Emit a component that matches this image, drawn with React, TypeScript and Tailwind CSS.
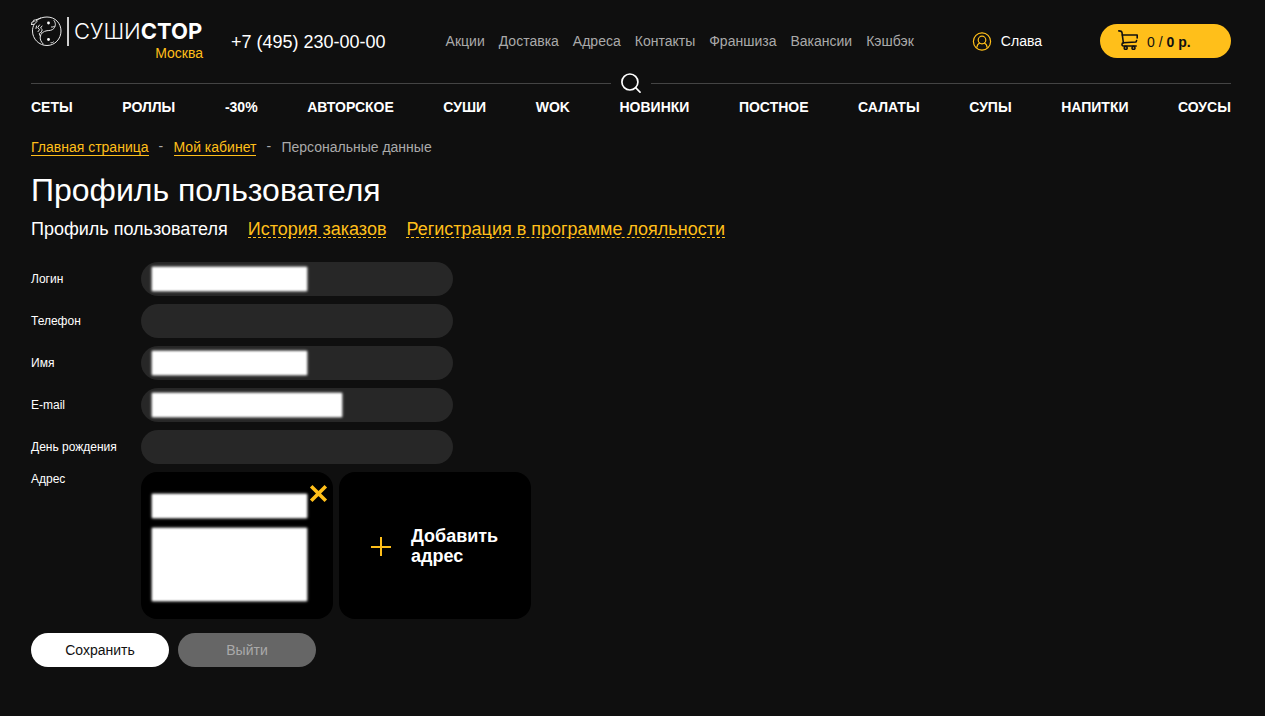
import type { ReactNode } from 'react';

interface Field {
    id: string;
    label: string;
    type: string;
    maskClass?: string;
}

const topLinks = ['Акции', 'Доставка', 'Адреса', 'Контакты', 'Франшиза', 'Вакансии', 'Кэшбэк'];

const menu = [
    'СЕТЫ',
    'РОЛЛЫ',
    '-30%',
    'АВТОРСКОЕ',
    'СУШИ',
    'WOK',
    'НОВИНКИ',
    'ПОСТНОЕ',
    'САЛАТЫ',
    'СУПЫ',
    'НАПИТКИ',
    'СОУСЫ'
];

const fields: Field[] = [
    { id: 'login', label: 'Логин', type: 'text', maskClass: 'w-[155px]' },
    { id: 'phone', label: 'Телефон', type: 'tel' },
    { id: 'name', label: 'Имя', type: 'text', maskClass: 'w-[155px]' },
    { id: 'email', label: 'E-mail', type: 'email', maskClass: 'w-[190px]' },
    { id: 'birthday', label: 'День рождения', type: 'text' }
];

function LogoMark() {
    return (
        <svg className="w-8 h-8" viewBox="0 0 32 32" fill="none" stroke="#e8e8e8" strokeWidth="1" strokeLinecap="round" strokeLinejoin="round">
            <path d="M5 6C8 3.200 12 2 16 2c8.200 0 14 6.200 14 14s-6 14.500-14 14.500S1.500 24 1.500 16c0-2.500.6-4.700 1.700-6.700" />
            <path d="M.5 9.500 1 7 3.200 6.500 2.500 5.300C5 4.800 7.200 4.300 9.500 3M.5 9.500l2.700-.2L6 6.500" />
            <path d="M23 5.500c1.800 2.300 2 5.500-.2 8-1.800 2-4.300 2-6.800 2.200-3.500.4-6.500 2.800-6.800 6.300-.2 2.700 1 5 3 7" />
            <path d="M20.500 12c1 .2 2 0 3-.7M9.200 21l-1-2.500 2.300-1.500M8.500 10 6.800 12.500l1.700 2.200-1.500 2M11 11l-1.500 2 1.800 1.700-.8 1.800M5.500 11 5 13.500" />
            <path d="M20 27.700c1 .2 1.800 0 2.500-.8" />
            <circle cx="17.500" cy="8" r="1.400" fill="#fff" stroke="none" />
            <circle cx="17.500" cy="24.500" r="1.400" fill="#fff" stroke="none" />
        </svg>
    );
}

function UserIcon() {
    return (
        <svg className="w-5 h-5" viewBox="0 0 20 20" fill="none" stroke="#ffbf1a" strokeWidth="1.200">
            <circle cx="10" cy="10.500" r="8.600" />
            <circle cx="10" cy="9" r="3.800" />
            <path d="M4.800 16.800c.2-2.500 1.400-4.200 3.200-5M15.200 16.800c-.2-2.500-1.400-4.200-3.200-5" />
        </svg>
    );
}

function CartIcon() {
    return (
        <svg className="w-5 h-5" viewBox="0 0 20 20" fill="none" stroke="#111" strokeWidth="1.600" strokeLinecap="round" strokeLinejoin="round">
            <path d="M.8.900c2 0 2.900.4 3.200 1.800L5.400 13" />
            <path d="M4.300 5H19.200v3M18 12l-12.800.8c-1.500.3-1.800 3.200.2 3.200h12.800M18 12l.6-1.500" />
            <circle cx="7.700" cy="17.900" r="1.500" />
            <circle cx="15.500" cy="17.900" r="1.500" />
        </svg>
    );
}

function Mask({ className }: { className: string }) {
    return <span aria-hidden="true" className={`block bg-white blur-[1px] shadow-[0_0_2px_#fff] ${className}`} />;
}

function Crumb({ children }: { children: ReactNode }) {
    return (
        <>
            <a href="#" className="text-[#ffbf1a] border-b border-[#ffbf1a]">{children}</a>
            <span className="w-[5px] leading-[14px] text-[#aaa]">-</span>
        </>
    );
}

function Header() {
    return (
        <header>
            <div className="flex items-start h-[73px] pt-[15px]">
                <a href="#" className="w-[172px] shrink-0">
                    <span className="flex items-center h-8">
                        <LogoMark />
                        <span className="w-[2px] h-[29px] ml-1 mr-[5px] bg-white/80" />
                        <span className="text-[22px] leading-8 font-['Inter',sans-serif] whitespace-nowrap">
                            <span className="font-light">СУШИ</span>
                            <span className="font-bold">СТОР</span>
                        </span>
                    </span>
                    <span className="block text-right text-sm leading-4 -mt-0.5 text-[#ffbf1a]">Москва</span>
                </a>
                <a href="tel:+74952300000" className="ml-7 mt-[15px] text-lg leading-6 whitespace-nowrap">+7 (495) 230-00-00</a>
                <nav className="flex gap-[14px] ml-[60px] mt-4 text-sm leading-5 text-[#aaa]">
                    {topLinks.map((link) => (
                        <a key={link} href="#">{link}</a>
                    ))}
                </nav>
                <div className="flex items-center ml-auto mt-[9px]">
                    <a href="#" className="flex items-center gap-[9px] text-sm leading-5">
                        <UserIcon />
                        Слава
                    </a>
                    <button type="button" className="flex items-center gap-[9px] w-[131px] h-[34px] ml-[58px] pl-[18px] rounded-full bg-[#ffbf1a] text-sm text-[#111]">
                        <span className="-mt-0.5"><CartIcon /></span>
                        <span className="pt-0.5">0 / <b>0 р.</b></span>
                    </button>
                </div>
            </div>
            <div className="flex items-center h-5">
                <span className="flex-1 h-px bg-[#444]" />
                <button type="button" aria-label="Поиск" className="flex justify-center w-10">
                    <svg className="w-5 h-5" viewBox="0 0 20 20" fill="none" stroke="#fff" strokeWidth="1.700">
                        <circle cx="8.900" cy="9" r="8" />
                        <path d="m14.600 14.700 5 5" />
                    </svg>
                </button>
                <span className="flex-1 h-px bg-[#444]" />
            </div>
            <nav className="flex justify-between mt-1 text-sm leading-5 font-bold">
                {menu.map((item) => (
                    <a key={item} href="#">{item}</a>
                ))}
            </nav>
        </header>
    );
}

export default function App() {
    return (
        <div className="min-h-screen bg-[#0f0f0f] pl-[31px] pr-[34px] pb-12 font-['Liberation_Sans',sans-serif] text-white">
            <Header />

            <main>
                <div className="flex gap-[10px] mt-[22px] text-sm leading-4">
                    <Crumb>Главная страница</Crumb>
                    <Crumb>Мой кабинет</Crumb>
                    <span className="text-[#aaa]">Персональные данные</span>
                </div>

                <h1 className="mt-[14px] text-[32px] leading-10">Профиль пользователя</h1>

                <div className="flex gap-5 mt-[11px] text-lg leading-4">
                    <span>Профиль пользователя</span>
                    <a href="#" className="text-[#ffbf1a] border-b border-dashed border-[#ffbf1a]">История заказов</a>
                    <a href="#" className="text-[#ffbf1a] border-b border-dashed border-[#ffbf1a]">Регистрация в программе лояльности</a>
                </div>

                <form className="mt-6">
                    <div className="flex flex-col gap-2">
                        {fields.map((field) => (
                            <div key={field.id} className="flex items-center">
                                <label htmlFor={field.id} className="w-[110px] text-xs">{field.label}</label>
                                <div className="relative w-[312px]">
                                    <input
                                        id={field.id}
                                        type={field.type}
                                        className="block w-full h-[34px] px-4 rounded-full bg-[#272727] text-sm"
                                    />
                                    {field.maskClass && (
                                        <div className="absolute left-[11px] top-[5px]">
                                            <Mask className={`h-6 ${field.maskClass}`} />
                                        </div>
                                    )}
                                </div>
                            </div>
                        ))}

                        <div className="flex">
                            <span className="w-[110px] text-xs leading-[14px]">Адрес</span>
                            <div className="flex gap-[6px]">
                                {/* Saved address */}
                                <div className="relative flex flex-col gap-[10px] w-48 h-[147px] pl-[11px] pt-[22px] rounded-2xl bg-black">
                                    <Mask className="w-[155px] h-6" />
                                    <Mask className="w-[155px] h-[73px]" />
                                    <button type="button" aria-label="Удалить адрес" className="absolute top-3 right-[5px]">
                                        <svg className="w-[19px] h-[19px]" viewBox="0 0 19 19" stroke="#ffbf1a" strokeWidth="3.600">
                                            <path d="M2.200 2.200 16.800 16.800M16.800 2.200 2.200 16.800" />
                                        </svg>
                                    </button>
                                </div>

                                <button type="button" className="flex items-center gap-5 w-48 h-[147px] pl-8 rounded-2xl bg-black text-left text-lg leading-5 font-bold">
                                    <svg className="w-5 h-5 shrink-0" viewBox="0 0 20 20" stroke="#ffbf1a" strokeWidth="2">
                                        <path d="M0 11h20M10 1v19" />
                                    </svg>
                                    <span>Добавить<br />адрес</span>
                                </button>
                            </div>
                        </div>
                    </div>

                    <div className="flex gap-[9px] mt-[14px] text-sm">
                        <button type="button" className="w-[138px] h-[34px] rounded-full bg-white text-[#111]">Сохранить</button>
                        <button type="button" className="w-[138px] h-[34px] rounded-full bg-[#666] text-[#aaa]">Выйти</button>
                    </div>
                </form>
            </main>
        </div>
    );
}
